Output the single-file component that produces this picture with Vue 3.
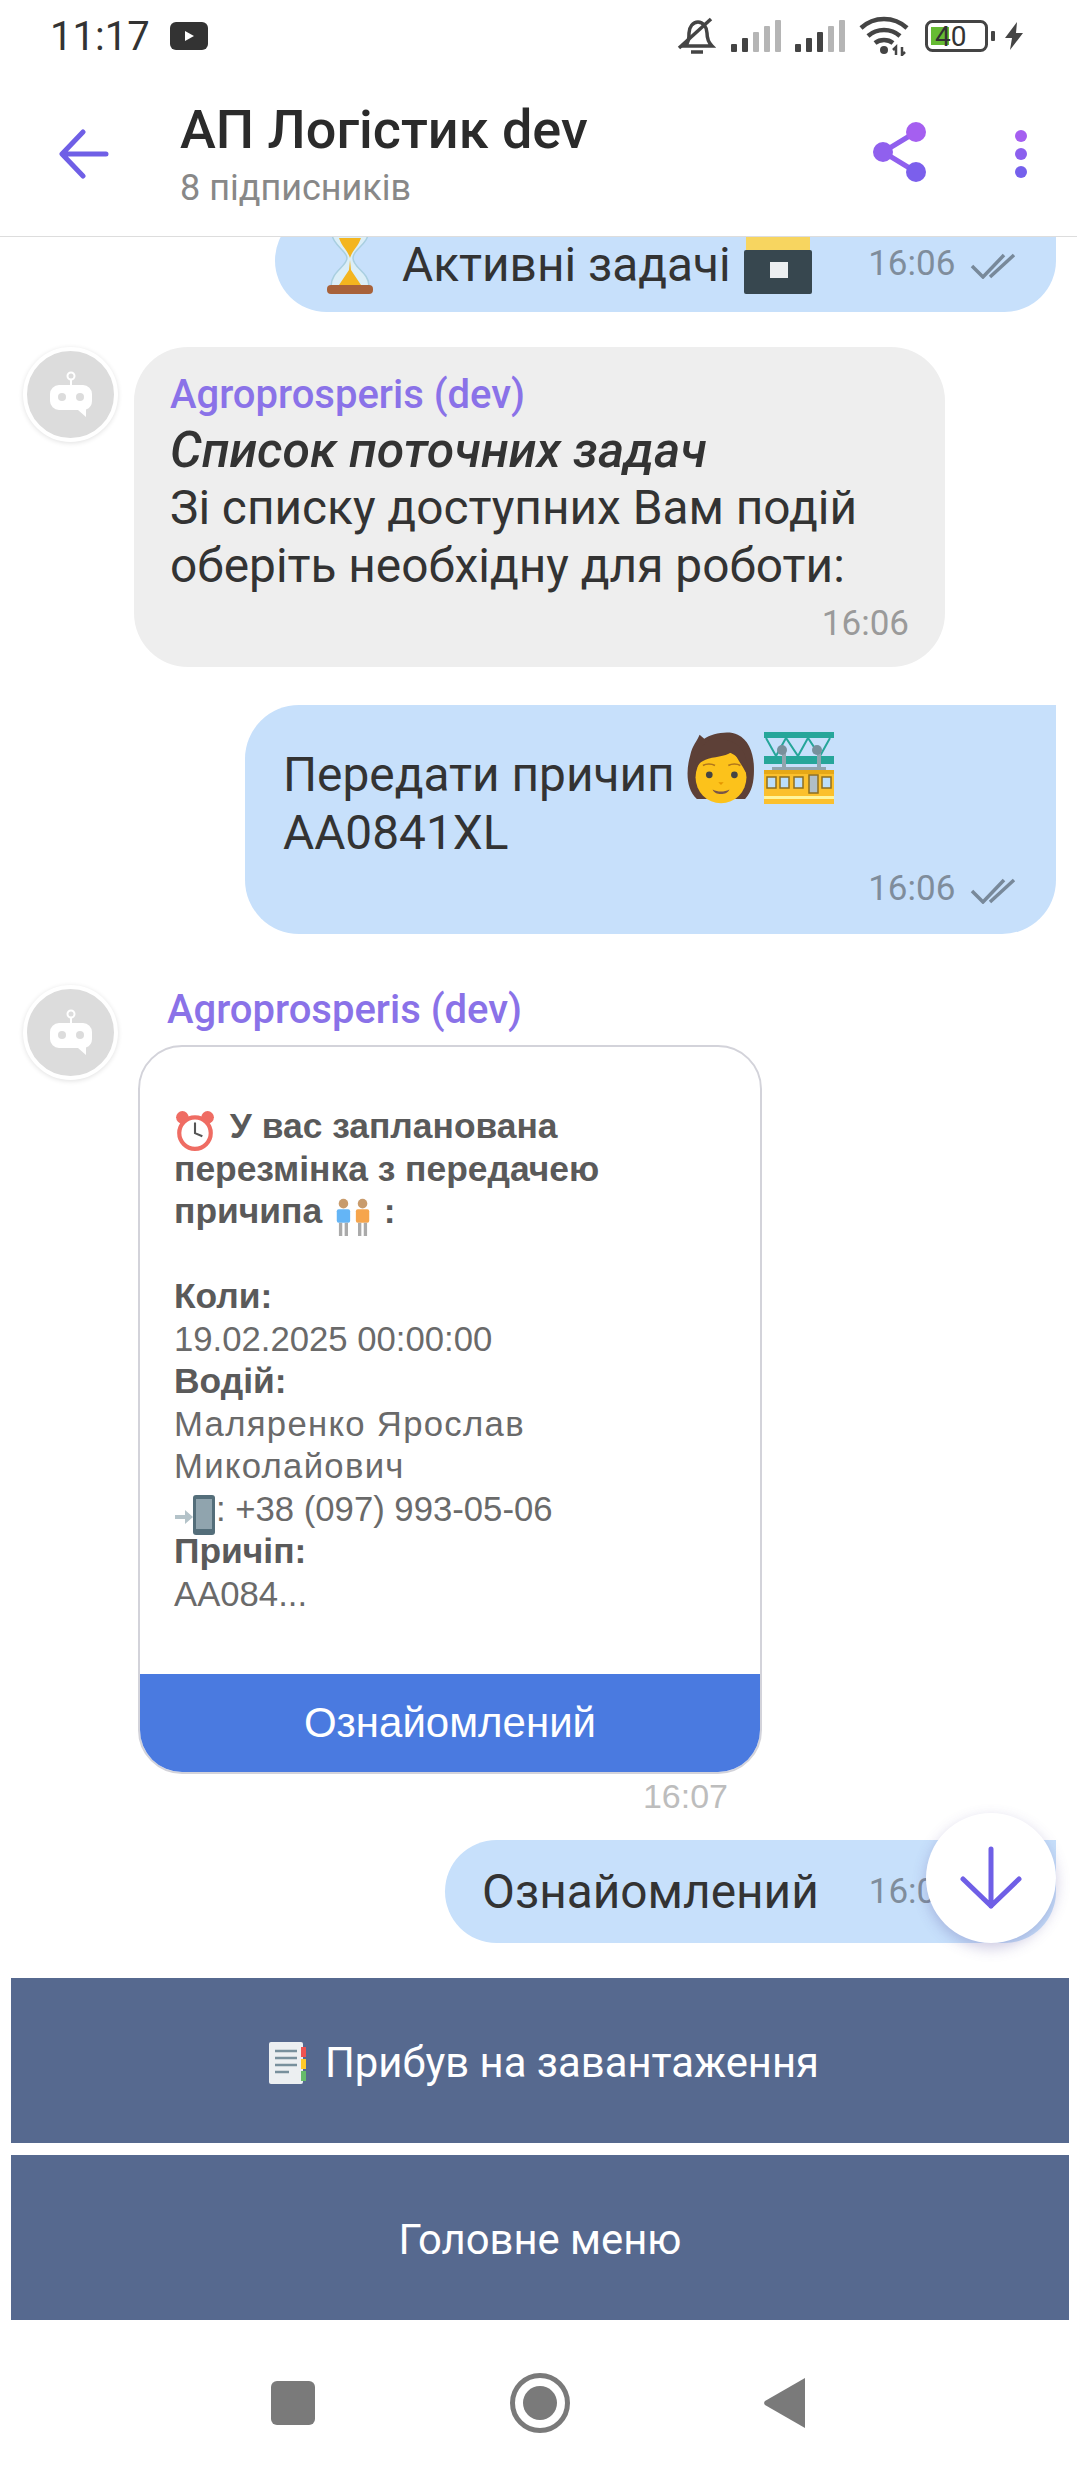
<template>
  <div class="screen">
    <!-- status bar -->
    <div class="status">
      <span class="clock">11:17</span>
      <svg class="yt" width="38" height="28" viewBox="0 0 38 28"><rect width="38" height="28" rx="6" fill="#333"/><path d="M15 9l9 5-9 5z" fill="#fff"/></svg>
      <div class="status-right">
        <svg width="40" height="42" viewBox="0 0 40 42"><path d="M8 31c4-4 4-8 4-13 0-6 4-11 9-11s9 5 9 11c0 5 1 9 5 13z" fill="none" stroke="#444" stroke-width="3.5"/><path d="M14 37h12" stroke="#444" stroke-width="3.5"/><path d="M2 33L34 4" stroke="#444" stroke-width="3.5"/></svg>
        <svg v-for="n in signals" :key="n" class="signal" width="50" height="34" viewBox="0 0 50 34">
          <rect x="0" y="25" width="6" height="8" rx="1" fill="#444"/>
          <rect x="11" y="19" width="6" height="14" rx="1" fill="#444"/>
          <rect x="22" y="13" width="6" height="20" rx="1" :fill="n === 2 ? '#444' : '#b5b5b5'"/>
          <rect x="33" y="7" width="6" height="26" rx="1" fill="#b5b5b5"/>
          <rect x="44" y="1" width="6" height="32" rx="1" fill="#b5b5b5"/>
        </svg>
        <svg class="wifi" width="50" height="40" viewBox="0 0 50 40"><g fill="none" stroke="#444" stroke-width="4.5"><path d="M2 12c13-12 33-12 46 0"/><path d="M9 20c9-8 23-8 32 0"/><path d="M16 27c5-4 13-4 18 0"/></g><circle cx="25" cy="34" r="4" fill="#444"/><path d="M37 39v-8l-3 3M43 31v8l3-3" stroke="#444" stroke-width="2.5" fill="none"/></svg>
        <svg class="batt" width="70" height="32" viewBox="0 0 70 32">
          <rect x="1.500" y="1.500" width="60" height="29" rx="6" fill="#fff" stroke="#444" stroke-width="3"/>
          <rect x="6" y="7" width="18" height="18" fill="#66bb33"/>
          <text x="10" y="26" class="batt-text">40</text>
          <rect x="66" y="11" width="4" height="10" rx="1" fill="#444"/>
        </svg>
        <svg class="bolt" width="18" height="28" viewBox="0 0 18 28"><path d="M12 0L0 16h7L5 28l13-17h-7z" fill="#444"/></svg>
      </div>
    </div>

    <!-- channel header -->
    <header class="topbar">
      <svg class="back" width="50" height="50" viewBox="0 0 50 50"><path d="M47 25H4M24 3L3 25l21 22" fill="none" stroke="#6f5fe6" stroke-width="5" stroke-linecap="round" stroke-linejoin="round"/></svg>
      <div class="topbar-title">
        <div class="title">АП Логістик dev</div>
        <div class="subs">8 підписників</div>
      </div>
      <svg class="share" width="54" height="60" viewBox="0 0 54 60">
        <path d="M43 10L10 30l33 20" fill="none" stroke="#9060ee" stroke-width="5"/>
        <circle cx="43" cy="10" r="10" fill="#a55ff0"/><circle cx="10" cy="30" r="10" fill="#9060ee"/><circle cx="43" cy="50" r="10" fill="#7b5fec"/>
      </svg>
      <div class="dots"><i class="d1"></i><i class="d2"></i><i class="d3"></i></div>
    </header>

    <!-- messages -->
    <main class="chat">
      <div class="out out-first">
        <div class="bubble-out b-active">
          <svg class="emoji hourglass" viewBox="0 0 48 68">
            <path d="M5 2c0 18 16 22 16 30S5 46 5 60h38c0-14-16-18-16-28S43 20 43 2z" fill="#dbeef7" stroke="#a9cfe0" stroke-width="1.500"/>
            <path d="M13 12c3 9 9 13 11 20 2-7 8-11 11-20z" fill="#f3b51f"/>
            <path d="M24 34l-1 10-10 15h22L25 44z" fill="#f3b51f"/>
            <rect x="1" y="59" width="46" height="9" rx="4" fill="#a8623a"/>
          </svg>
          <span class="txt">Активні задачі</span>
          <svg class="emoji box" viewBox="0 0 68 68">
            <rect x="2" y="0" width="64" height="26" fill="#f7d560"/><rect x="6" y="0" width="16" height="10" fill="#e8503a"/>
            <rect x="0" y="24" width="68" height="44" rx="2" fill="#37474f"/><rect x="26" y="36" width="18" height="16" fill="#eceff1"/>
          </svg>
          <span class="meta">16:06
            <svg class="checks" width="48" height="26" viewBox="0 0 48 26"><path d="M2 13l11 11L34 2M20 24L44 2" fill="none" stroke="#78899a" stroke-width="3.500"/></svg>
          </span>
        </div>
      </div>

      <div class="in in-first">
        <div class="avatar">
          <svg width="42" height="48" viewBox="0 0 42 48"><circle cx="21" cy="5" r="3.500" fill="none" stroke="#fff" stroke-width="2"/><path d="M21 8v7" stroke="#fff" stroke-width="2"/><path d="M9 14h24a9 9 0 0 1 9 9v7a9 9 0 0 1-6 8.500V46l-8-7H9a9 9 0 0 1-9-9v-7a9 9 0 0 1 9-9z" fill="#fff"/><circle cx="12" cy="26" r="4" fill="#dcdcdc"/><circle cx="30" cy="26" r="4" fill="#dcdcdc"/></svg>
        </div>
        <div class="bubble-in">
          <div class="name">Agroprosperis (dev)</div>
          <div class="txt lead">Список поточних задач</div>
          <div class="txt">Зі списку доступних Вам подій</div>
          <div class="txt">оберіть необхідну для роботи:</div>
          <div class="meta meta-in">16:06</div>
        </div>
      </div>

      <div class="out out-second">
        <div class="bubble-out b-transfer">
          <div class="txt">Передати причип
            <svg class="emoji person" viewBox="0 0 200 215">
              <path d="M28 200C-6 170-4 110 8 70 14 40 30 25 36 8l14 12C72 6 120-6 150 8c30 14 46 50 48 90 2 40-2 76-26 102z" fill="#5d4037"/>
              <ellipse cx="100" cy="135" rx="76" ry="78" fill="#fcc21b"/>
              <path d="M22 130c0-30 16-42 40-50 30-8 58-6 76-26 8 26 24 42 40 74 6-50-12-100-78-108C46 14 18 70 22 130z" fill="#5d4037"/>
              <circle cx="65" cy="128" r="10" fill="#444"/><circle cx="140" cy="128" r="10" fill="#444"/>
              <path d="M46 100c10-6 26-6 36 0M122 100c10-6 26-6 36 0" stroke="#b0761c" stroke-width="5" fill="none"/>
              <path d="M92 150h16l-8 8z" fill="#e59600"/>
              <path d="M75 172c16 8 34 8 50 0-6 18-44 18-50 0z" fill="#795548"/>
            </svg><svg class="emoji rail" viewBox="0 0 70 72">
              <rect width="70" height="6" fill="#26a69a"/><rect y="24" width="70" height="8" fill="#26a69a"/>
              <path d="M2 6l10 18 10-18 12 18 10-18 12 18 10-18" fill="none" stroke="#26a69a" stroke-width="2"/>
              <path d="M20 20v18M55 20v18" stroke="#90a4ae" stroke-width="4"/>
              <circle cx="18" cy="18" r="5" fill="#78909c"/><circle cx="53" cy="18" r="5" fill="#78909c"/>
              <rect x="8" y="35" width="54" height="5" fill="#90a4ae"/>
              <rect y="38" width="70" height="34" fill="#fbc02d"/><rect y="38" width="70" height="4" fill="#e6a817"/>
              <rect x="3" y="45" width="9" height="11" fill="#bbdefb" stroke="#8d6e1f" stroke-width="1.500"/><rect x="16" y="45" width="9" height="11" fill="#bbdefb" stroke="#8d6e1f" stroke-width="1.500"/><rect x="30" y="45" width="9" height="11" fill="#bbdefb" stroke="#8d6e1f" stroke-width="1.500"/><rect x="45" y="43" width="9" height="18" fill="#b0bec5" stroke="#8d6e1f" stroke-width="1.500"/><rect x="58" y="45" width="9" height="11" fill="#bbdefb" stroke="#8d6e1f" stroke-width="1.500"/>
              <rect y="64" width="70" height="3" fill="#fff59d"/>
            </svg>
          </div>
          <div class="txt">AA0841XL</div>
          <span class="meta meta-end">16:06
            <svg class="checks" width="48" height="26" viewBox="0 0 48 26"><path d="M2 13l11 11L34 2M20 24L44 2" fill="none" stroke="#78899a" stroke-width="3.500"/></svg>
          </span>
        </div>
      </div>

      <div class="in in-second">
        <div class="avatar avatar-up">
          <svg width="42" height="48" viewBox="0 0 42 48"><circle cx="21" cy="5" r="3.500" fill="none" stroke="#fff" stroke-width="2"/><path d="M21 8v7" stroke="#fff" stroke-width="2"/><path d="M9 14h24a9 9 0 0 1 9 9v7a9 9 0 0 1-6 8.500V46l-8-7H9a9 9 0 0 1-9-9v-7a9 9 0 0 1 9-9z" fill="#fff"/><circle cx="12" cy="26" r="4" fill="#dcdcdc"/><circle cx="30" cy="26" r="4" fill="#dcdcdc"/></svg>
        </div>
        <div class="rich">
          <div class="name name-rich">Agroprosperis (dev)</div>
          <div class="card">
            <div class="card-body">
              <div class="strong"><svg class="mini clock-icon" viewBox="0 0 40 40"><circle cx="20" cy="22" r="15" fill="#fff" stroke="#ef6c63" stroke-width="4"/><circle cx="8" cy="7" r="6" fill="#ef6c63"/><circle cx="32" cy="7" r="6" fill="#ef6c63"/><path d="M20 12v10l7 3" stroke="#555" stroke-width="2" fill="none"/></svg> У вас запланована</div>
              <div class="strong">перезмінка з передачею</div>
              <div class="strong">причипа <svg class="mini people" viewBox="0 0 44 40"><circle cx="12" cy="6" r="5" fill="#c89b6c"/><circle cx="32" cy="6" r="5" fill="#c89b6c"/><rect x="5" y="12" width="14" height="14" rx="2" fill="#64b5f6"/><rect x="25" y="12" width="14" height="14" rx="2" fill="#f6a54c"/><path d="M9 26v14M15 26v14M29 26v14M35 26v14" stroke="#aaa" stroke-width="3.500"/></svg> :</div>
              <div class="blank"></div>
              <div class="strong">Коли:</div>
              <div>19.02.2025 00:00:00</div>
              <div class="strong">Водій:</div>
              <div class="cy">Маляренко Ярослав</div>
              <div class="cy">Миколайович</div>
              <div><svg class="mini phone" viewBox="0 0 40 40"><path d="M0 20h10v-5l8 7-8 7v-5H0z" fill="#b4c3c9"/><rect x="18" y="0" width="22" height="40" rx="3" fill="#546e7a"/><rect x="21" y="4" width="16" height="30" fill="#90a4ae"/></svg>: +38 (097) 993-05-06</div>
              <div class="strong">Причіп:</div>
              <div>AA084...</div>
            </div>
            <div class="card-btn">Ознайомлений</div>
          </div>
          <div class="card-time">16:07</div>
        </div>
      </div>

      <div class="out out-last">
        <div class="bubble-out b-ack">
          <span class="txt">Ознайомлений</span>
          <span class="meta">16:06</span>
        </div>
      </div>

      <button class="to-bottom">
        <svg width="64" height="64" viewBox="0 0 64 64"><path d="M32 3v57M4 33l28 27 28-27" fill="none" stroke="#6f5fe6" stroke-width="5" stroke-linecap="round" stroke-linejoin="round"/></svg>
      </button>
    </main>

    <!-- bot keyboard -->
    <div class="keyboard">
      <div class="kb-btn kb-first">
        <svg class="kb-icon" viewBox="0 0 40 44"><rect x="2" y="1" width="34" height="42" rx="2" fill="#eceff1"/><path d="M8 10h22M8 17h22M8 24h22M8 31h14" stroke="#78909c" stroke-width="2.500"/><rect x="34" y="6" width="5" height="10" fill="#ef5350"/><rect x="34" y="18" width="5" height="10" fill="#ffca28"/><rect x="34" y="30" width="5" height="10" fill="#66bb6a"/></svg>
        Прибув на завантаження
      </div>
      <div class="kb-btn">Головне меню</div>
    </div>

    <!-- android nav -->
    <nav class="navbar">
      <span class="nav-square"></span>
      <span class="nav-circle"><i></i></span>
      <svg width="42" height="50" viewBox="0 0 42 50"><path d="M41 0v50L1 27a3 3 0 0 1 0-4z" fill="#7a7a7a"/></svg>
    </nav>
  </div>
</template>

<script setup>
const signals = [1, 2]
</script>

<style>
html, body { margin: 0; background: #fff; }
</style>

<style scoped>
.screen {
  width: 1077px;
  height: 2474px;
  background: #fff;
  font-family: Roboto, "Noto Sans", sans-serif;
  display: flex;
  flex-direction: column;
  overflow: hidden;
  color: #333;
}
.status {
  height: 72px;
  display: flex;
  align-items: center;
  padding: 0 54px 0 50px;
  box-sizing: border-box;
}
.clock { font-size: 40px; color: #333; letter-spacing: 0; }
.yt { margin-left: 20px; }
.status-right { margin-left: auto; display: flex; align-items: center; gap: 14px; }
.batt { margin-left: 2px; }
.batt-text { font-family: Roboto, sans-serif; font-size: 28px; fill: #333; }
.bolt { margin-left: -4px; }

.topbar {
  height: 164px;
  display: flex;
  align-items: center;
  border-bottom: 1px solid #ddd;
  box-sizing: content-box;
  position: relative;
  z-index: 2;
  background: #fff;
  padding-left: 59px;
}
.topbar-title { margin-left: 71px; flex: 1; }
.title { font-size: 54px; font-weight: 500; line-height: 60px; color: #2b2b2b; }
.subs { font-size: 36px; color: #888; line-height: 40px; margin-top: 8px; }
.share { margin-right: 88px; margin-top: -4px; }
.dots { width: 12px; margin-right: 50px; display: flex; flex-direction: column; gap: 6px; }
.dots i { width: 12px; height: 12px; border-radius: 50%; display: block; }
.d1 { background: #a55ff0; }
.d2 { background: #8c60ee; }
.d3 { background: #7560ec; }

.chat { position: relative; height: 1741px; overflow: hidden; padding-right: 21px; }
.out { display: flex; justify-content: flex-end; }
.bubble-out { background: #c7e0fb; border-radius: 54px 0 54px 54px; box-sizing: border-box; }
.txt { font-size: 47.8px; line-height: 58px; color: #333; }
.meta { font-size: 35px; color: #7f8d9c; white-space: nowrap; }
.checks { vertical-align: -4px; margin-left: 6px; }
.emoji { vertical-align: 7px; margin: -20px 0; }

.out-first { margin-top: -28px; }
.b-active { width: 781px; height: 103px; display: flex; align-items: center; padding: 0 38px 0 51px; }
.b-active .txt { line-height: 40px; margin-top: 8px; }
.hourglass { width: 48px; height: 68px; margin: -2px 28px 0 0; }
.box { width: 68px; height: 68px; margin: -2px 0 0 13px; }
.b-active .meta { margin-left: auto; margin-top: 6px; }

.in { display: flex; padding-left: 23px; }
.in-first { margin-top: 35px; }
.avatar {
  width: 95px;
  height: 95px;
  box-sizing: border-box;
  border-radius: 50%;
  background: #dcdcdc;
  border: 4px solid #fff;
  box-shadow: 0 1px 5px rgba(0, 0, 0, 0.12);
  display: flex;
  align-items: center;
  justify-content: center;
  flex-shrink: 0;
}
.avatar-up { margin-top: -5px; }
.bubble-in {
  margin-left: 16px;
  width: 811px;
  height: 320px;
  box-sizing: border-box;
  background: #eee;
  border-radius: 54px;
  padding: 26px 36px 0;
}
.name { font-size: 40px; font-weight: 500; color: #8a72e8; line-height: 44px; }
.lead { font-style: italic; font-weight: 500; font-size: 50px; margin-top: 4px; }
.meta-in { text-align: right; color: #9a9a9a; margin-top: 9px; margin-right: 0; line-height: 40px; }

.out-second { margin-top: 38px; }
.b-transfer { width: 811px; height: 229px; padding: 41px 38px 0 38px; position: relative; }
.meta-end { display: block; text-align: right; margin-top: 7px; line-height: 40px; }
.person { width: 68px; height: 72px; }
.rail { width: 70px; height: 72px; margin-left: 9px; }

.in-second { margin-top: 56px; }
.rich { margin-left: 23px; width: 640px; }
.name-rich { margin-left: 26px; margin-top: -2px; margin-bottom: 13px; white-space: nowrap; }
.card {
  margin-left: -3px;
  width: 624px;
  height: 729px;
  box-sizing: border-box;
  border: 2.5px solid #d3d3da;
  border-radius: 44px;
  overflow: hidden;
  display: flex;
  flex-direction: column;
  background: #fff;
}
.card-body {
  flex: 1;
  padding: 58px 20px 0 34px;
  font-family: "Liberation Sans", Arial, sans-serif;
  font-size: 34.7px;
  line-height: 42.5px;
  color: #6a6a6a;
}
.strong { font-weight: 700; color: #5a5a5a; font-size: 35.4px; }
.cy { letter-spacing: 1.3px; }
.blank { height: 42.5px; }
.mini { width: 38px; height: 38px; vertical-align: -6px; margin: -8px 0; }
.clock-icon { width: 42px; height: 42px; margin-right: 4px; }
.people { width: 42px; height: 40px; }
.phone { width: 42px; height: 40px; }
.card-btn {
  height: 98px;
  background: #4a7ae0;
  color: #fff;
  font-family: "Liberation Sans", Arial, sans-serif;
  font-size: 42px;
  line-height: 98px;
  text-align: center;
}
.card-time { text-align: right; font-family: "Liberation Sans", Arial, sans-serif; font-size: 34px; line-height: 40px; color: #bdbdbd; margin-right: 53px; margin-top: 2px; }

.out-last { margin-top: 24px; }
.b-ack { width: 611px; height: 103px; display: flex; align-items: center; padding-left: 37px; }
.b-ack .meta { margin-left: 50px; }

.to-bottom {
  position: absolute;
  left: 926px;
  top: 1576px;
  width: 130px;
  height: 130px;
  border: 0;
  padding: 0;
  border-radius: 50%;
  background: #fff;
  box-shadow: 0 5px 14px rgba(90, 80, 160, 0.3);
  display: flex;
  align-items: center;
  justify-content: center;
}

.keyboard { display: flex; flex-direction: column; gap: 12px; padding: 0 8px 0 11px; }
.kb-btn {
  height: 165px;
  box-sizing: border-box;
  padding-top: 4px;
  background: #56698f;
  color: #fff;
  font-size: 41.8px;
  display: flex;
  align-items: center;
  justify-content: center;
  gap: 18px;
}
.kb-first { padding-left: 6px; }
.kb-icon { width: 40px; height: 44px; }

.navbar { flex: 1; display: flex; align-items: center; padding-left: 271px; padding-top: 12px; }
.nav-square { width: 44px; height: 44px; border-radius: 6px; background: #7a7a7a; }
.nav-circle {
  margin-left: 195px;
  margin-right: 194px;
  width: 60px;
  height: 60px;
  box-sizing: border-box;
  border: 5px solid #7a7a7a;
  border-radius: 50%;
  display: flex;
  align-items: center;
  justify-content: center;
}
.nav-circle i { width: 34px; height: 34px; border-radius: 50%; background: #7a7a7a; display: block; }
</style>
